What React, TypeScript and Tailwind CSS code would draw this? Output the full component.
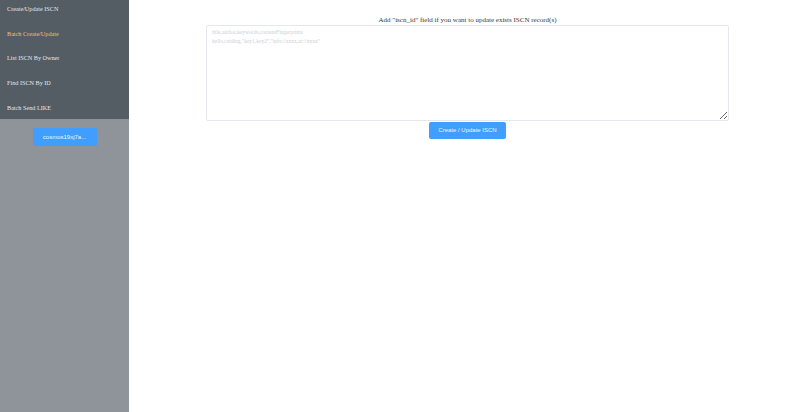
import React from 'react';

const menuItems = [
  { label: 'Create/Update ISCN', active: false },
  { label: 'Batch Create/Update', active: true },
  { label: 'List ISCN By Owner', active: false },
  { label: 'Find ISCN By ID', active: false },
  { label: 'Batch Send LIKE', active: false },
];

const placeholder =
  'title,author,keywords,contentFingerprints\nhello,catding,"key1,key2","ipfs://xxxx,ar://xxxx"';

export default function App() {
  return (
    <div className="flex h-[412px] w-[806px] overflow-hidden bg-white">
      {/* Sidebar */}
      <aside className="flex w-[129px] shrink-0 flex-col bg-[#8f939a]">
        <div className="h-[119px] overflow-hidden bg-[#545c64]">
          <ul className="-mt-[3.5px]">
            {menuItems.map((item) => (
              <li
                key={item.label}
                className={`flex h-[24.6px] items-center px-[7px] font-['Liberation_Serif',serif] text-[6.2px] font-normal ${
                  item.active ? 'text-[#e8c766]' : 'text-[#e4e6e8]'
                }`}
              >
                {item.label}
              </li>
            ))}
          </ul>
        </div>
        <div className="flex justify-center pt-[9px]">
          <button className="h-[18px] w-[64px] rounded-[2px] bg-[#409eff] font-['Liberation_Sans',sans-serif] text-[6px] text-[#eef5ff]">
            cosmos19xj7a...
          </button>
        </div>
      </aside>

      {/* Main */}
      <main className="flex flex-1 flex-col items-center pt-[16px]">
        <p className="font-['Liberation_Serif',serif] text-[7px] leading-[9px] text-[#3a3a3a]">
          Add "iscn_id" field if you want to update exists ISCN record(s)
        </p>
        <textarea
          className="h-[96px] w-[523px] rounded-[2px] border border-[#e4e7ed] px-[5px] py-[2px] font-['Liberation_Serif',serif] text-[5.5px] leading-[9px] outline-none placeholder:text-[#cdd0d5]"
          placeholder={placeholder}
        />
        <button className="mt-[1px] h-[17px] w-[77px] rounded-[2px] bg-[#409eff] font-['Liberation_Sans',sans-serif] text-[6px] text-[#eef5ff]">
          Create / Update ISCN
        </button>
      </main>
    </div>
  );
}
